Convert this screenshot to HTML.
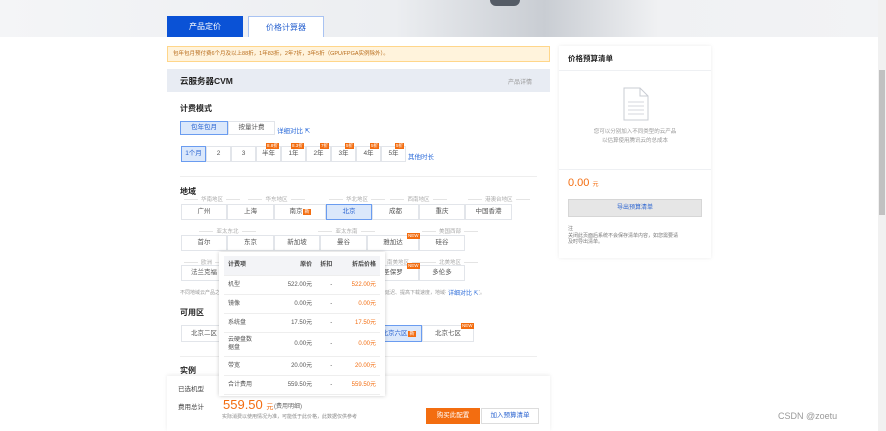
<!DOCTYPE html>
<html><head><meta charset="utf-8"><style>
*{margin:0;padding:0;box-sizing:border-box}
body{width:886px;height:431px;overflow:hidden;background:#fff;font-family:"Liberation Sans","Noto Sans CJK SC",sans-serif;position:relative;color:#333;font-size:7px}
.a{position:absolute}
.banner{left:0;top:0;width:878px;height:37px;background:linear-gradient(90deg,#f4f5f7 0%,#eceef1 45%,#c9cdd3 62%,#f0f1f3 75%,#f2f3f5 100%)}
.tab{top:16px;height:21px;width:76px;font-size:8px;text-align:center;line-height:21px}
.btn{position:absolute;border:1px solid #e2e5ea;background:#fff;text-align:center;color:#555;font-size:6.5px;white-space:nowrap}
.sel{background:#dbe8fb;border:1px solid #6a9cf0;color:#2a63d0}
.lbl{position:absolute;font-size:5.5px;color:#aaa;text-align:center;white-space:nowrap}
.lbl:before,.lbl:after{content:"";display:inline-block;width:14px;height:1px;background:#e4e4e4;vertical-align:middle;margin:0 3px}
.bd{position:absolute;background:#f36d10;color:#fff;font-size:4.5px;height:6px;line-height:6px;padding:0 1px}
.h{font-size:8px;font-weight:bold;color:#222}
.link{color:#2a6ad9}
.pr td{height:19px;padding:0;line-height:8px;border-bottom:1px solid #eee;font-size:6px;color:#555}
</style></head><body>
<div class="a banner"></div>
<div class="a" style="left:490px;top:0;width:30px;height:6px;border-radius:0 0 15px 15px;background:#555c66"></div>
<div class="a tab" style="left:167px;background:#0a52d6;color:#fff">产品定价</div>
<div class="a tab" style="left:248px;background:#fff;border:1px solid #a9c3f2;border-bottom:none;color:#2a63d0">价格计算器</div>
<div class="a" style="left:0;top:37px;width:878px;height:394px;background:#fff"></div>
<div class="a" style="left:167px;top:46px;width:383px;height:16px;background:#fff3dc;border:1px solid #ffd68a;font-size:5.5px;color:#b86c1b;line-height:14px;padding-left:5px">包年包月预付费6个月及以上88折，1年83折，2年7折，3年5折（GPU/FPGA实例除外）。</div>
<div class="a" style="left:167px;top:69px;width:383px;height:23px;background:#e8ecf3"></div>
<div class="a h" style="left:180px;top:75px;font-size:8.5px">云服务器CVM</div>
<div class="a" style="left:508px;top:77px;font-size:6px;color:#999">产品详情</div>
<div class="a h" style="left:180px;top:103px">计费模式</div>
<div class="btn sel" style="left:180px;top:121px;width:48px;height:14px;line-height:12px">包年包月</div>
<div class="btn" style="left:228px;top:121px;width:47px;height:14px;line-height:12px">按量计费</div>
<div class="a link" style="left:277px;top:125px;font-size:6.5px">详细对比 ⇱</div>
<div class="btn sel" style="left:181px;top:146px;width:25px;height:16px;line-height:14px">1个月</div>
<div class="btn" style="left:206px;top:146px;width:25px;height:16px;line-height:14px">2</div>
<div class="btn" style="left:231px;top:146px;width:25px;height:16px;line-height:14px">3</div>
<div class="btn" style="left:256px;top:146px;width:25px;height:16px;line-height:14px">半年</div>
<div class="btn" style="left:281px;top:146px;width:25px;height:16px;line-height:14px">1年</div>
<div class="btn" style="left:306px;top:146px;width:25px;height:16px;line-height:14px">2年</div>
<div class="btn" style="left:331px;top:146px;width:25px;height:16px;line-height:14px">3年</div>
<div class="btn" style="left:356px;top:146px;width:25px;height:16px;line-height:14px">4年</div>
<div class="btn" style="left:381px;top:146px;width:25px;height:16px;line-height:14px">5年</div>
<div class="bd" style="left:266px;top:143px">8.8折</div><div class="bd" style="left:291px;top:143px">8.3折</div><div class="bd" style="left:320px;top:143px">7折</div><div class="bd" style="left:345px;top:143px">5折</div><div class="bd" style="left:370px;top:143px">5折</div><div class="bd" style="left:395px;top:143px">5折</div>
<div class="a link" style="left:408px;top:151px;font-size:6.5px">其他时长</div>
<div class="a" style="left:180px;top:176px;width:357px;height:1px;background:#eee"></div>
<div class="a h" style="left:180px;top:186px">地域</div>
<div class="lbl" style="left:181px;top:195px;width:46px">华南地区</div>
<div class="lbl" style="left:227px;top:195px;width:99px">华东地区</div>
<div class="lbl" style="left:326px;top:195px;width:46px">华北地区</div>
<div class="lbl" style="left:372px;top:195px;width:93px">西南地区</div>
<div class="lbl" style="left:465px;top:195px;width:47px">港澳台地区</div>
<div class="btn" style="left:181px;top:204px;width:46px;height:16px;line-height:14px">广州</div>
<div class="btn" style="left:227px;top:204px;width:47px;height:16px;line-height:14px">上海</div>
<div class="btn" style="left:274px;top:204px;width:52px;height:16px;line-height:14px">南京<span style="background:#f36d10;color:#fff;font-size:5px;padding:0 1px;margin-left:1px">新</span></div>
<div class="btn sel" style="left:326px;top:204px;width:46px;height:16px;line-height:14px">北京</div>
<div class="btn" style="left:372px;top:204px;width:47px;height:16px;line-height:14px">成都</div>
<div class="btn" style="left:419px;top:204px;width:46px;height:16px;line-height:14px">重庆</div>
<div class="btn" style="left:465px;top:204px;width:47px;height:16px;line-height:14px">中国香港</div>
<div class="lbl" style="left:181px;top:227px;width:93px">亚太东北</div>
<div class="lbl" style="left:274px;top:227px;width:145px">亚太东南</div>
<div class="lbl" style="left:419px;top:227px;width:46px">美国西部</div>
<div class="btn" style="left:181px;top:235px;width:46px;height:16px;line-height:14px">首尔</div>
<div class="btn" style="left:227px;top:235px;width:47px;height:16px;line-height:14px">东京</div>
<div class="btn" style="left:274px;top:235px;width:46px;height:16px;line-height:14px">新加坡</div>
<div class="btn" style="left:320px;top:235px;width:47px;height:16px;line-height:14px">曼谷</div>
<div class="btn" style="left:367px;top:235px;width:52px;height:16px;line-height:14px">雅加达</div>
<div class="btn" style="left:419px;top:235px;width:46px;height:16px;line-height:14px">硅谷</div>
<div class="bd" style="left:407px;top:233px">NEW</div>
<div class="lbl" style="left:181px;top:258px;width:46px">欧洲</div>
<div class="lbl" style="left:367px;top:258px;width:52px">南美地区</div>
<div class="lbl" style="left:419px;top:258px;width:46px">北美地区</div>
<div class="btn" style="left:181px;top:265px;width:46px;height:16px;line-height:14px">法兰克福</div>
<div class="btn" style="left:367px;top:265px;width:52px;height:16px;line-height:14px">圣保罗</div>
<div class="btn" style="left:419px;top:265px;width:46px;height:16px;line-height:14px">多伦多</div>
<div class="bd" style="left:407px;top:263px">NEW</div>
<div class="a" style="left:180px;top:289px;font-size:5px;color:#999;white-space:nowrap">不同地域云产品之间内网不互通；购买后不能更换，建议选择靠近您客户的地域，以降低访问延迟、提高下载速度，地域不支持切换绑定。</div>
<div class="a link" style="left:446px;top:288px;font-size:6px;background:#fff;padding-left:2px">详细对比 ⇱</div>
<div class="a h" style="left:180px;top:307px">可用区</div>
<div class="btn" style="left:181px;top:325px;width:46px;height:17px;line-height:15px">北京二区</div>
<div class="btn sel" style="left:375px;top:325px;width:47px;height:17px;line-height:15px">北京六区<span style="background:#f36d10;color:#fff;font-size:5px;padding:0 1px;margin-left:1px">新</span></div>
<div class="btn" style="left:422px;top:325px;width:52px;height:17px;line-height:15px">北京七区</div>
<div class="bd" style="left:461px;top:323px">NEW</div>
<div class="a" style="left:180px;top:356px;width:357px;height:1px;background:#eee"></div>
<div class="a h" style="left:180px;top:365px">实例</div>
<div class="a" style="left:167px;top:376px;width:383px;height:55px;background:#fff;box-shadow:0 -1px 4px rgba(0,0,0,.08)"></div>
<div class="a" style="left:178px;top:383px;font-size:6.5px;color:#444">已选机型</div>
<div class="a" style="left:178px;top:401px;font-size:6.5px;color:#444">费用总计</div>
<div class="a" style="left:223px;top:397px;font-size:13px;color:#f36d10;white-space:nowrap">559.50 <span style="font-size:7px">元</span></div>
<div class="a" style="left:274px;top:401px;font-size:6px;color:#666">(费用明细)</div>
<div class="a" style="left:222px;top:413px;font-size:5px;color:#888;white-space:nowrap">实际消费以使用情况为准，可能低于此价格，此数据仅供参考</div>
<div class="a" style="left:426px;top:408px;width:54px;height:16px;background:#f36d10;color:#fff;font-size:6.5px;text-align:center;line-height:16px">购买此配置</div>
<div class="a" style="left:481px;top:408px;width:58px;height:16px;border:1px solid #ddd;color:#2a63d0;font-size:6.5px;text-align:center;line-height:14px">加入预算清单</div>
<div class="a" style="left:219px;top:252px;width:166px;height:144px;background:#fff;box-shadow:0 0 4px rgba(0,0,0,.2);padding:4px 5px">
<table class="pr" style="width:156px;border-collapse:collapse">
<tr style="background:#f3f4f7"><td style="height:13px;font-weight:bold;color:#444;padding-left:4px">计费项</td><td style="text-align:right;font-weight:bold;color:#444">原价</td><td style="text-align:right;font-weight:bold;color:#444">折扣</td><td style="text-align:right;font-weight:bold;color:#444;padding-right:4px">折后价格</td></tr>
<tr><td style="padding-left:4px">机型</td><td style="text-align:right">522.00元</td><td style="text-align:right">-</td><td style="text-align:right;color:#f36d10;padding-right:4px">522.00元</td></tr>
<tr><td style="padding-left:4px">镜像</td><td style="text-align:right">0.00元</td><td style="text-align:right">-</td><td style="text-align:right;color:#f36d10;padding-right:4px">0.00元</td></tr>
<tr><td style="padding-left:4px">系统盘</td><td style="text-align:right">17.50元</td><td style="text-align:right">-</td><td style="text-align:right;color:#f36d10;padding-right:4px">17.50元</td></tr>
<tr><td style="padding-left:4px;height:24px">云硬盘数<br>据盘</td><td style="text-align:right">0.00元</td><td style="text-align:right">-</td><td style="text-align:right;color:#f36d10;padding-right:4px">0.00元</td></tr>
<tr><td style="padding-left:4px">带宽</td><td style="text-align:right">20.00元</td><td style="text-align:right">-</td><td style="text-align:right;color:#f36d10;padding-right:4px">20.00元</td></tr>
<tr><td style="padding-left:4px">合计费用</td><td style="text-align:right">559.50元</td><td style="text-align:right">-</td><td style="text-align:right;color:#f36d10;padding-right:4px">559.50元</td></tr>
</table></div>
<div class="a" style="left:559px;top:46px;width:152px;height:212px;background:#fff;box-shadow:0 0 4px rgba(0,0,0,.08)"></div>
<div class="a h" style="left:568px;top:53px;font-size:7.5px">价格预算清单</div>
<div class="a" style="left:559px;top:70px;width:152px;height:1px;background:#eef0f3"></div>
<svg class="a" style="left:622px;top:87px" width="28" height="34" viewBox="0 0 28 34"><path d="M2 1H18L26 9V33H2Z M18 1V9H26" fill="#fff" stroke="#c9ccd3" stroke-width="1"/><path d="M6 15h16M6 19h16M6 23h16M6 27h16" stroke="#d4d7dc"/></svg>
<div class="a" style="left:559px;top:128px;width:152px;text-align:center;font-size:5.5px;color:#999;line-height:9px">您可以分别加入不同类型的云产品<br>以估算使用腾讯云的总成本</div>
<div class="a" style="left:559px;top:169px;width:152px;height:1px;background:#eef0f3"></div>
<div class="a" style="left:568px;top:177px;font-size:11px;color:#f36d10">0.00 <span style="font-size:6px">元</span></div>
<div class="a" style="left:568px;top:199px;width:134px;height:18px;background:#e6e6e6;border:1px solid #d6d6d6;color:#2a63d0;font-size:6px;text-align:center;line-height:16px">导出预算清单</div>
<div class="a" style="left:568px;top:226px;font-size:5px;color:#777;line-height:6.5px">注<br>关闭此页面后系统不会保存清单内容，如您需要请<br>及时导出清单。</div>
<div class="a" style="left:878px;top:0;width:8px;height:431px;background:#f1f1f1"></div>
<div class="a" style="left:879px;top:70px;width:6px;height:145px;background:#c1c1c1"></div>
<div class="a" style="left:778px;top:411px;font-size:9px;color:#999">CSDN @zoetu</div>
</body></html>
